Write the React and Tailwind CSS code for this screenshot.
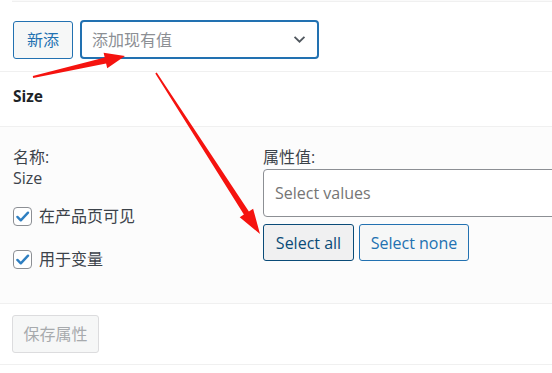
import React from "react";

const font = { fontFamily: '"Segoe UI", "Open Sans", "Noto Sans CJK SC", sans-serif' };

function Check({ label }) {
  return (
    <label className="flex items-center gap-[7px] text-[16px] text-[#3c434a]">
      <span className="flex h-[19px] w-[19px] items-center justify-center rounded-[4px] border border-[#8c8f94] bg-white">
        <svg viewBox="0 0 20 20" className="h-[17px] w-[17px]">
          <path d="M4 10.5l4 4L16.5 5.5" fill="none" stroke="#2f7fc1" strokeWidth="2.8" strokeLinecap="round" strokeLinejoin="round" />
        </svg>
      </span>
      {label}
    </label>
  );
}

export default function App() {
  return (
    <div className="relative h-[373px] w-[552px] overflow-hidden bg-white" style={font}>
      <div className="ml-[12px] h-[2px] border-b border-[#f0f0f0] bg-[#fafafa]" />

      <div className="flex items-center gap-[7px] px-[13px] pt-[18px] pb-[12px]">
        <button className="h-[38px] w-[60px] rounded-[3px] border border-[#2271b1] bg-[#f6f7f7] text-[16px] text-[#2271b1]">
          新添
        </button>
        <div className="flex h-[39px] w-[239px] items-center justify-between rounded-[4px] border-2 border-[#2271b1] bg-white pl-[10px] pr-[11px]">
          <span className="text-[16px] text-[#8c8f94]">添加现有值</span>
          <svg viewBox="0 0 14 10" className="h-[9px] w-[13px]">
            <path d="M1.5 2l5.5 5.5L12.5 2" fill="none" stroke="#50575e" strokeWidth="2" />
          </svg>
        </div>
      </div>

      <div className="flex h-[56px] items-center border-y border-[#f0f0f0] px-[13px] pb-[4px]">
        <h3 className="text-[15.5px] font-bold text-[#1d2327]">Size</h3>
      </div>

      <div className="flex h-[176px] bg-[#fcfcfc] pt-[20px]">
        <div className="w-[263px] shrink-0 pl-[13px]">
          <div className="text-[16px] leading-[21px] text-[#3c434a]">名称:</div>
          <div className="text-[16px] leading-[21px] text-[#3c434a]">Size</div>
          <div className="mt-[15px] flex flex-col gap-[19px]">
            <Check label="在产品页可见" />
            <Check label="用于变量" />
          </div>
        </div>
        <div className="w-[400px] shrink-0">
          <div className="text-[16px] leading-[21px] text-[#3c434a]">属性值:</div>
          <div className="mt-[1px] flex h-[48px] items-center rounded-[4px] border border-[#8c8f94] bg-white pl-[11px]">
            <span className="text-[16px] text-[#757575]">Select values</span>
          </div>
          <div className="mt-[7px] flex gap-[5px]">
            <button className="h-[37px] w-[91px] rounded-[3px] border border-[#0a4b78] bg-[#f0f0f1] text-[16px] text-[#0a4b78]">
              Select all
            </button>
            <button className="h-[37px] w-[110px] rounded-[3px] border border-[#2271b1] bg-[#f6f7f7] text-[16px] text-[#2271b1]">
              Select none
            </button>
          </div>
        </div>
      </div>

      <div className="flex h-[62px] items-center border-y border-[#f0f0f0] px-[12px]">
        <button className="h-[38px] w-[87px] rounded-[3px] border border-[#dcdcde] bg-[#f6f7f7] text-[16px] text-[#a7aaad]">
          保存属性
        </button>
      </div>

      <svg className="pointer-events-none absolute left-0 top-0" width="552" height="373">
        <polygon
          fill="#f5130f"
          points="33.2,78 106.1,63.4 107.2,68.3 125,56 103.6,52.7 104.7,57.6 32.8,76"
        />
        <polygon
          fill="#f5130f"
          points="155.3,73.4 243.9,214.6 239.7,217.3 260,234 253.1,208.7 248.9,211.4 156.7,72.6"
        />
      </svg>
    </div>
  );
}
